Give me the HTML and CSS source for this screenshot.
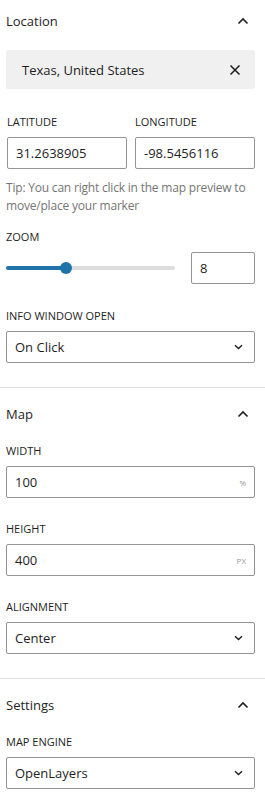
FILE: index.html
```html
<!DOCTYPE html>
<html lang="en">
<head>
    <meta charset="UTF-8">
    <meta name="viewport" content="width=device-width, initial-scale=1.0">
    <title>Map block settings</title>
    <link rel="stylesheet" href="styles.css">
</head>
<body>
    <div class="panel panel-first">
        <div class="panel-head">
            <span class="panel-title">Location</span>
            <svg class="chev-up" width="12" height="8" viewBox="0 0 12 8"><path d="M1.5 6.5 L6 2 L10.5 6.5" fill="none" stroke="#1e1e1e" stroke-width="1.6"/></svg>
        </div>
        <div class="place">
            <span>Texas, United States</span>
            <svg width="12" height="12" viewBox="0 0 12 12"><path d="M1.5 1.5 L10.5 10.5 M10.5 1.5 L1.5 10.5" stroke="#1e1e1e" stroke-width="1.5"/></svg>
        </div>
        <div class="coords">
            <div class="field">
                <div class="label">Latitude</div>
                <div class="input">31.2638905</div>
            </div>
            <div class="field">
                <div class="label">Longitude</div>
                <div class="input">-98.5456116</div>
            </div>
        </div>
        <p class="tip">Tip: You can right click in the map preview to move/place your marker</p>
        <div class="field field-zoom">
            <div class="label">Zoom</div>
            <div class="range-row">
                <div class="track"><div class="track-fill" style="width: 60px"></div><div class="thumb" style="left: 60px"></div></div>
                <div class="input input-num">8</div>
            </div>
        </div>
        <div class="field">
            <div class="label">Info window open</div>
            <div class="input select">On Click
                <svg width="9" height="6" viewBox="0 0 9 6"><path d="M1 1.2 L4.5 4.6 L8 1.2" fill="none" stroke="#1e1e1e" stroke-width="1.4"/></svg>
            </div>
        </div>
    </div>

    <div class="panel">
        <div class="panel-head">
            <span class="panel-title">Map</span>
            <svg class="chev-up" width="12" height="8" viewBox="0 0 12 8"><path d="M1.5 6.5 L6 2 L10.5 6.5" fill="none" stroke="#1e1e1e" stroke-width="1.6"/></svg>
        </div>
        <div class="panel-body">
            <div class="field">
                <div class="label">Width</div>
                <div class="input">100<span class="unit">%</span></div>
            </div>
            <div class="field">
                <div class="label">Height</div>
                <div class="input">400<span class="unit">PX</span></div>
            </div>
            <div class="field">
                <div class="label">Alignment</div>
                <div class="input select">Center
                    <svg width="9" height="6" viewBox="0 0 9 6"><path d="M1 1.2 L4.5 4.6 L8 1.2" fill="none" stroke="#1e1e1e" stroke-width="1.4"/></svg>
                </div>
            </div>
        </div>
    </div>

    <div class="panel">
        <div class="panel-head">
            <span class="panel-title">Settings</span>
            <svg class="chev-up" width="12" height="8" viewBox="0 0 12 8"><path d="M1.5 6.5 L6 2 L10.5 6.5" fill="none" stroke="#1e1e1e" stroke-width="1.6"/></svg>
        </div>
        <div class="panel-body">
            <div class="field">
                <div class="label">Map engine</div>
                <div class="input select">OpenLayers
                    <svg width="9" height="6" viewBox="0 0 9 6"><path d="M1 1.2 L4.5 4.6 L8 1.2" fill="none" stroke="#1e1e1e" stroke-width="1.4"/></svg>
                </div>
            </div>
        </div>
    </div>
</body>
</html>
```

FILE: styles.css
```css
body {
    margin: 0;
    background-color: #fff;
    color: #1e1e1e;
    font-family: "Open Sans", "Noto Sans", sans-serif;
    font-size: 13px;
}
.panel {
    border-top: 1px solid #e0e0e0;
    padding: 0 10px 24px 6px;
}
.panel-first {
    border-top: none;
}
.panel-head {
    height: 52px;
    display: flex;
    align-items: center;
    justify-content: space-between;
    padding-right: 6px;
}
.panel-first .panel-head {
    height: 42px;
}
.panel-title {
    font-size: 13px;
    font-weight: 500;
}
.panel-body {
    display: flex;
    flex-direction: column;
    gap: 24px;
    padding-top: 4px;
}
.place {
    margin-top: 8px;
    height: 39px;
    background-color: #f0f0f0;
    border-radius: 2px;
    display: flex;
    align-items: center;
    justify-content: space-between;
    padding: 0 14px 0 16px;
}
.coords {
    margin-top: 26px;
    display: grid;
    grid-template-columns: 1fr 1fr;
    gap: 8px;
    padding-left: 1px;
}
.label {
    font-size: 11px;
    font-weight: 500;
    line-height: 14px;
    text-transform: uppercase;
    margin-bottom: 8px;
}
.input {
    box-sizing: border-box;
    height: 32px;
    border: 1px solid #949494;
    border-radius: 2px;
    padding: 0 8px;
    display: flex;
    align-items: center;
    justify-content: space-between;
}
.unit {
    font-size: 8px;
    color: #9a9a9a;
}
.select svg {
    margin-right: 3px;
}
.tip {
    margin: 10px 0 15px;
    font-size: 12px;
    line-height: 18px;
    letter-spacing: -0.2px;
    color: #757575;
}
.field-zoom {
    margin-bottom: 25px;
}
.range-row {
    display: flex;
    align-items: center;
    gap: 16px;
}
.track {
    position: relative;
    flex: 1;
    height: 4px;
    background-color: #ddd;
    border-radius: 2px;
}
.track-fill {
    height: 4px;
    background-color: #1e73a8;
    border-radius: 2px;
}
.thumb {
    position: absolute;
    top: -4px;
    width: 12px;
    height: 12px;
    margin-left: -6px;
    border-radius: 50%;
    background-color: #1e73a8;
}
.input-num {
    width: 64px;
}
```
